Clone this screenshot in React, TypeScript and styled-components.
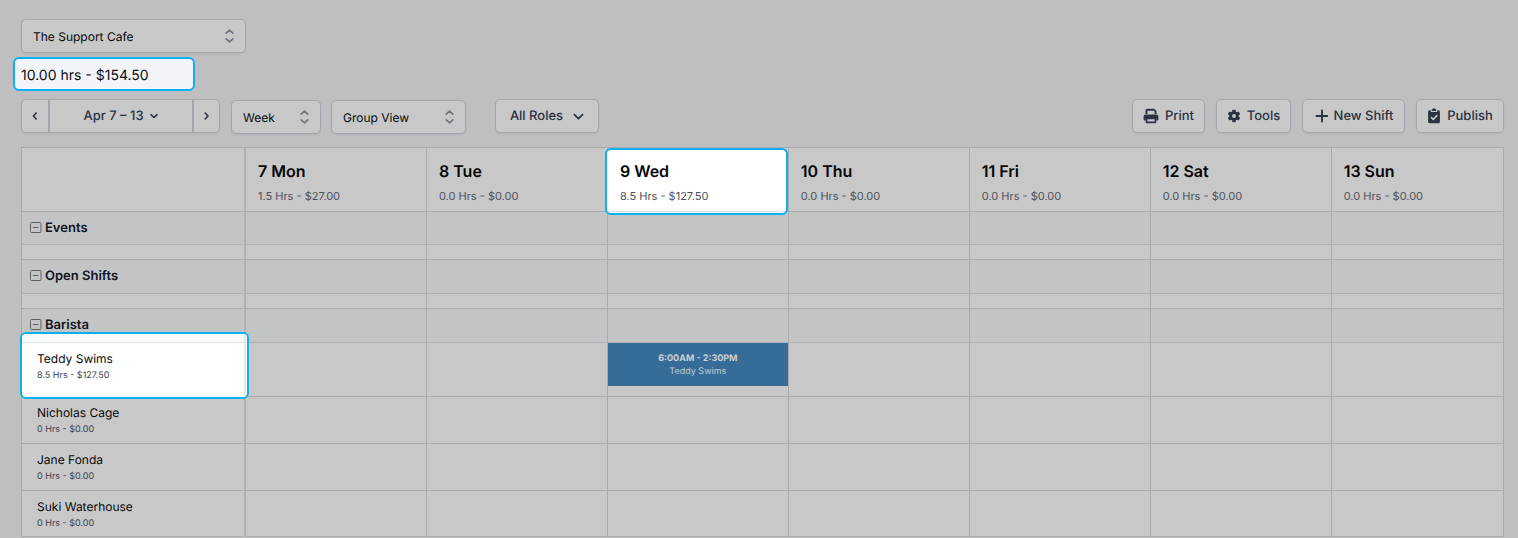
import React from 'react';
import styled, { createGlobalStyle } from 'styled-components';

const colors = {
  page: '#bfbfc1',
  panel: '#c8c8c8',
  group: '#c3c4c6',
  line: '#ababac',
  softLine: '#b0b1b5',
  control: '#a4a7ae',
  slate: '#2b3342',
  muted: '#4a505b',
  accent: '#0cb0ee',
};

const GlobalStyle = createGlobalStyle`
  *, *::before, *::after { box-sizing: border-box; }
  body {
    margin: 0;
    background: ${colors.page};
    color: #080808;
    font-family: Inter, "Liberation Sans", sans-serif;
    text-rendering: geometricPrecision;
  }
  button, select { font: inherit; margin: 0; text-rendering: inherit; }
`;

const Page = styled.main`
  padding: 19px 14px 0 21px;
`;

const SelectBox = styled.label<{ $width: number }>`
  position: relative;
  display: block;
  width: ${p => p.$width}px;
  height: 34px;
  svg {
    position: absolute;
    right: 10px;
    top: 8px;
    pointer-events: none;
  }
`;

const Select = styled.select`
  appearance: none;
  width: 100%;
  height: 34px;
  padding: 0 28px 0 11px;
  border: 1px solid ${colors.control};
  border-radius: 5px;
  background: ${colors.panel};
  box-shadow: 0 1px 2px rgba(0, 0, 0, 0.08);
  color: #080808;
  font-size: 12px;
`;

const Totals = styled.p`
  width: 182px;
  height: 34px;
  margin: 4px 0 8px -8px;
  padding: 0 6px;
  border: 2px solid ${colors.accent};
  border-radius: 6px;
  background: #f3f4f8;
  color: #0b0b0c;
  font-size: 14px;
  line-height: 33px;
`;

const Toolbar = styled.div`
  display: flex;
  align-items: flex-start;
  height: 48px;
`;

const Lowered = styled.div<{ $before: number }>`
  padding-top: 1px;
  margin-left: ${p => p.$before}px;
`;

const Actions = styled.div`
  display: flex;
  gap: 11px;
  margin-left: auto;
`;

const Button = styled.button<{ $width: number }>`
  display: flex;
  align-items: center;
  justify-content: center;
  gap: 6px;
  width: ${p => p.$width}px;
  height: 34px;
  padding: 0;
  border: 1px solid ${colors.control};
  border-radius: 5px;
  background: ${colors.panel};
  box-shadow: 0 1px 2px rgba(0, 0, 0, 0.06);
  color: ${colors.slate};
  font-size: 13px;
  font-weight: 500;
  white-space: nowrap;
`;

const RolesButton = styled(Button)`
  gap: 10px;
  margin-left: 29px;
`;

const DateGroup = styled.div`
  display: flex;
  ${Button}:first-child { border-radius: 5px 0 0 5px; }
  ${Button}:nth-child(2) { gap: 5px; border-radius: 0; }
  ${Button}:last-child { border-radius: 0 5px 5px 0; }
`;

const Schedule = styled.table`
  width: 100%;
  table-layout: fixed;
  border-collapse: separate;
  border-spacing: 0;
  border-top: 1px solid ${colors.line};
  border-left: 1px solid ${colors.line};
  background: ${colors.panel};
  th, td {
    padding: 0;
    text-align: left;
    vertical-align: top;
    border-right: 1px solid ${colors.line};
    border-bottom: 1px solid ${colors.line};
  }
  th:first-child, td:first-child {
    position: relative;
    border-right: 2px solid #b0b0b1;
  }
  th:first-child::after, td:first-child::after {
    content: "";
    position: absolute;
    inset: 0 0 -1px auto;
    width: 1px;
    background: ${colors.panel};
  }
`;

const NameCol = styled.col`
  width: 224px;
`;

const DayCol = styled.col`
  width: 12.21%;
`;

const DayHead = styled.th`
  position: relative;
  height: 64px;
  font-weight: 400;
`;

const Spotlight = styled.div`
  position: absolute;
  z-index: 1;
  inset: 0 0 -4px -3px;
  border: 2px solid ${colors.accent};
  border-radius: 6px;
  background: linear-gradient(#dedfe1, #dedfe1) 0 61px / 100% 1px no-repeat #fff;
`;

const DayText = styled.div`
  position: relative;
  z-index: 2;
  padding: 13px 0 0 12px;
`;

const DayName = styled.div`
  font-size: 16px;
  font-weight: 600;
  line-height: 20px;
  color: #050505;
`;

const DayHours = styled.div`
  margin-top: 7px;
  font-size: 11px;
  line-height: 16px;
  color: ${colors.muted};
`;

const GroupRow = styled.tr<{ $height: number }>`
  height: ${p => p.$height}px;
  background: ${colors.group};
  th, td { border-bottom-color: ${colors.softLine}; }
`;

const GroupLabel = styled.button`
  display: flex;
  align-items: center;
  gap: 3px;
  height: 32px;
  padding: 0 0 0 8px;
  border: 0;
  background: none;
  color: #11151f;
  font-size: 13px;
  font-weight: 600;
`;

const GapRow = styled.tr`
  height: 15px;
`;

const StaffRow = styled.tr<{ $height: number }>`
  height: ${p => p.$height}px;
`;

const StaffCell = styled.th`
  position: relative;
  font-weight: 400;
`;

const StaffSpotlight = styled.div`
  position: absolute;
  z-index: 1;
  inset: -11px -5px -3px -2px;
  overflow: hidden;
  border: 2px solid ${colors.accent};
  border-radius: 6px;
  background: #fff;
  &::before {
    content: "";
    display: block;
    height: 9px;
    border-bottom: 1px solid #e2e5e9;
    background: #f9fafc;
  }
  &::after {
    content: "";
    position: absolute;
    inset: 0 1px 0 auto;
    width: 2px;
    background: #e8e8ea;
  }
`;

const StaffText = styled.div`
  position: relative;
  z-index: 2;
  padding: 7px 0 0 15px;
`;

const StaffName = styled.div`
  font-size: 12px;
  line-height: 18px;
  color: #080808;
`;

const StaffHours = styled.div`
  margin-top: 2px;
  font-size: 9px;
  line-height: 12px;
  color: #3c424d;
`;

const Shift = styled.button`
  display: block;
  width: 100%;
  height: 43px;
  padding: 0;
  border: 0;
  background: #356d98;
  color: #c3ccd3;
  font-size: 9px;
  line-height: 13px;
  text-align: center;
  strong, span { display: block; }
  strong { font-weight: 700; color: #cbd0d3; }
`;

const Selector = () => (
  <svg width="13" height="18" viewBox="0 0 13 18" fill="none" stroke="#6f7580" strokeWidth="1.7" strokeLinecap="round" strokeLinejoin="round">
    <path d="M3.2 6.2 6.500 3.200l3.300 3M3.200 11.800l3.300 3 3.300-3" />
  </svg>
);

const Chevron = ({ d, size = 10, weight = 1.6 }: { d: string; size?: number; weight?: number }) => (
  <svg width={size} height={size} viewBox="0 0 10 10" fill="none" stroke={colors.slate} strokeWidth={weight} strokeLinecap="round" strokeLinejoin="round">
    <path d={d} />
  </svg>
);

const PrintIcon = () => (
  <svg width="16" height="16" viewBox="0 0 16 16" fill={colors.slate}>
    <path d="M4 .8h7.2L13.500 3v3h-1.900V3.600L10.900 2.700H4.400V6H2.500V2.300A1.500 1.500 0 0 1 4 .8z" />
    <path d="M2.500 6.500h11A1.900 1.900 0 0 1 15.400 8.400v3.200a.8.8 0 0 1-.8.800h-1.200v-1.900H2.600v1.900H1.400a.8.8 0 0 1-.8-.8V8.400a1.900 1.900 0 0 1 1.900-1.900z" />
    <path fillRule="evenodd" d="M2.600 9.700h10.800v4.300a1.300 1.300 0 0 1-1.300 1.300H3.900A1.300 1.300 0 0 1 2.600 14zm1.800 1.500v2.300h7.200v-2.300z" />
  </svg>
);

const GearIcon = () => (
  <svg width="14" height="14" viewBox="0 0 14 14">
    <g fill={colors.slate}>
      <circle cx="7" cy="7" r="4.700" />
      {[0, 60, 120].map(a => (
        <rect key={a} x="5.300" y="0.700" width="3.400" height="12.600" rx="0.800" transform={`rotate(${a} 7 7)`} />
      ))}
    </g>
    <circle cx="7" cy="7" r="1.900" fill={colors.panel} />
  </svg>
);

const PlusIcon = () => (
  <svg width="14" height="14" viewBox="0 0 14 14" stroke={colors.slate} strokeWidth="1.900" strokeLinecap="round">
    <path d="M8 1.500v11M2.500 7h11" />
  </svg>
);

const PublishIcon = () => (
  <svg width="14" height="16" viewBox="0 0 14 16" fill="none">
    <path fill={colors.slate} d="M2.600 2.200h1.200v1.900h6.400V2.200h1.200A1.500 1.500 0 0 1 12.900 3.700v10a1.600 1.600 0 0 1-1.600 1.600H2.700a1.600 1.600 0 0 1-1.600-1.600v-10a1.500 1.500 0 0 1 1.500-1.500z" />
    <path fill={colors.slate} d="M4.800 1.300h.8a1.500 1.500 0 0 1 2.800 0h.8v1.800H4.800z" />
    <path stroke={colors.panel} strokeWidth="1.600" strokeLinecap="round" strokeLinejoin="round" d="m4.400 9.500 1.900 1.900 3.600-3.800" />
  </svg>
);

const CollapseIcon = () => (
  <svg width="12" height="12" viewBox="0 0 12 12" fill="none" stroke="#5e6063" strokeWidth="1">
    <rect x="0.500" y="0.500" width="10.500" height="10" rx="1" />
    <path d="M3 5.500h5.500" />
  </svg>
);

const days = [
  ['7 Mon', '1.5 Hrs - $27.00'],
  ['8 Tue', '0.0 Hrs - $0.00'],
  ['9 Wed', '8.5 Hrs - $127.50'],
  ['10 Thu', '0.0 Hrs - $0.00'],
  ['11 Fri', '0.0 Hrs - $0.00'],
  ['12 Sat', '0.0 Hrs - $0.00'],
  ['13 Sun', '0.0 Hrs - $0.00'],
];

const staff = [
  { name: 'Teddy Swims', hours: '8.5 Hrs - $127.50', height: 54, shiftDay: 2 },
  { name: 'Nicholas Cage', hours: '0 Hrs - $0.00', height: 47 },
  { name: 'Jane Fonda', hours: '0 Hrs - $0.00', height: 47 },
  { name: 'Suki Waterhouse', hours: '0 Hrs - $0.00', height: 46 },
];

const Group = ({ label, height = 34 }: { label: string; height?: number }) => (
  <GroupRow $height={height}>
    <th scope="row"><GroupLabel><CollapseIcon />{label}</GroupLabel></th>
    {days.map(([day]) => <td key={day} />)}
  </GroupRow>
);

const Gap = () => (
  <GapRow>
    <td />
    {days.map(([day]) => <td key={day} />)}
  </GapRow>
);

export default function App() {
  return (
    <>
      <GlobalStyle />
      <Page>
        <SelectBox $width={225}>
          <Select aria-label="Location"><option>The Support Cafe</option></Select>
          <Selector />
        </SelectBox>
        <Totals>10.00 hrs - $154.50</Totals>
        <Toolbar>
          <DateGroup>
            <Button $width={28} aria-label="Previous week"><Chevron d="M6.200 2 3.400 5l2.800 3" /></Button>
            <Button $width={144}>Apr 7 – 13 <Chevron d="M2 3.700 5 6.500l3-2.800" /></Button>
            <Button $width={27} aria-label="Next week"><Chevron d="M3.200 2 6 5 3.200 8" /></Button>
          </DateGroup>
          <Lowered $before={11}>
            <SelectBox $width={90}>
              <Select aria-label="Period"><option>Week</option></Select>
              <Selector />
            </SelectBox>
          </Lowered>
          <Lowered $before={10}>
            <SelectBox $width={135}>
              <Select aria-label="View"><option>Group View</option></Select>
              <Selector />
            </SelectBox>
          </Lowered>
          <RolesButton $width={104}>All Roles <Chevron d="M1.300 3.300 5 6.900l3.700-3.600" size={11} /></RolesButton>
          <Actions>
            <Button $width={73}><PrintIcon />Print</Button>
            <Button $width={75}><GearIcon />Tools</Button>
            <Button $width={103}><PlusIcon />New Shift</Button>
            <Button $width={88}><PublishIcon />Publish</Button>
          </Actions>
        </Toolbar>
        <Schedule>
          <colgroup>
            <NameCol />
            {days.slice(0, 6).map(([day]) => <DayCol key={day} />)}
            <col />
          </colgroup>
          <thead>
            <tr>
              <td />
              {days.map(([day, hours], i) => (
                <DayHead key={day} scope="col">
                  {i === 2 && <Spotlight />}
                  <DayText>
                    <DayName>{day}</DayName>
                    <DayHours>{hours}</DayHours>
                  </DayText>
                </DayHead>
              ))}
            </tr>
          </thead>
          <tbody>
            <Group label="Events" height={33} />
            <Gap />
            <Group label="Open Shifts" />
            <Gap />
            <Group label="Barista" />
            {staff.map(person => (
              <StaffRow key={person.name} $height={person.height}>
                <StaffCell scope="row">
                  {person.shiftDay !== undefined && <StaffSpotlight />}
                  <StaffText>
                    <StaffName>{person.name}</StaffName>
                    <StaffHours>{person.hours}</StaffHours>
                  </StaffText>
                </StaffCell>
                {days.map(([day], i) => (
                  <td key={day}>
                    {person.shiftDay === i && (
                      <Shift><strong>6:00AM - 2:30PM</strong><span>{person.name}</span></Shift>
                    )}
                  </td>
                ))}
              </StaffRow>
            ))}
          </tbody>
        </Schedule>
      </Page>
    </>
  );
}
